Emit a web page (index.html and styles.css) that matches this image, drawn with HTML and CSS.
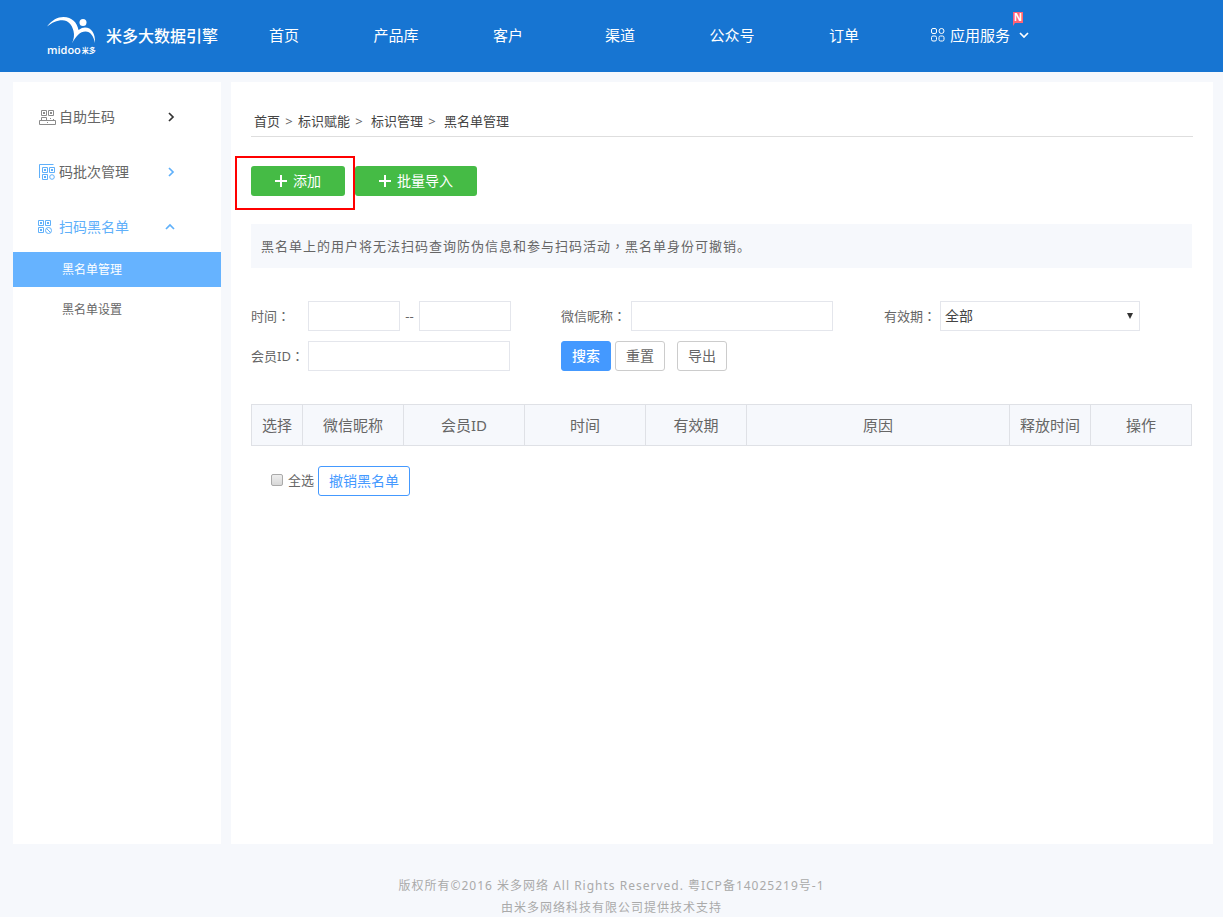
FILE: index.html
```html
<!DOCTYPE html>
<html lang="zh-CN">
<head>
<meta charset="utf-8">
<title>黑名单管理 - 米多大数据引擎</title>
<link rel="stylesheet" href="styles.css">
</head>
<body>
<header class="topbar">
  <a class="brand" href="#">
    <span class="brand-mark">
      <svg class="brand-figure" width="50" height="28" viewBox="0 0 50 28" fill="#fff" aria-hidden="true">
        <path d="M0 9.500C5 3 10.500 0 16.500 0c8.500 0 13.500 5.500 15 13C34 11.300 36 10.500 38 10.500c6.500 0 10.500 6 10 15.500-1.500-7-4.500-11.500-9.500-11.500-5.500 0-9.500 4.500-13.500 12 2-5 2.500-8.500 1.500-12.500C25 7.500 21 3.200 15.500 3.200 9.500 3.200 5 5.500 0 9.500z"/>
        <circle cx="36" cy="5.500" r="3.500"/>
      </svg>
      <span class="brand-word">midoo<small>米多</small></span>
    </span>
    <span class="brand-name">米多大数据引擎</span>
  </a>
  <nav class="mainnav" aria-label="主导航">
    <a href="#">首页</a>
    <a href="#">产品库</a>
    <a href="#">客户</a>
    <a href="#">渠道</a>
    <a href="#">公众号</a>
    <a href="#">订单</a>
    <a class="apps" href="#">
      <svg width="14" height="14" viewBox="0 0 14 14" fill="none" stroke="#fff" aria-hidden="true">
        <rect x=".5" y=".5" width="5" height="5" rx="1.500"/><circle cx="10.500" cy="3" r="2.500"/>
        <rect x=".5" y="8" width="5" height="5" rx="1.500"/><rect x="8" y="8" width="5" height="5" rx="1.500"/>
      </svg>
      <span class="apps-label">应用服务<span class="new-flag">N</span></span>
      <svg width="10" height="6" viewBox="0 0 10 6" fill="none" stroke="#fff" stroke-width="1.700" aria-hidden="true"><path d="M1 1l4 4 4-4"/></svg>
    </a>
  </nav>
</header>

<div class="layout">
  <aside class="sidebar">
    <a class="side-item" href="#">
      <svg class="side-icon" width="18" height="18" viewBox="0 0 18 18" fill="none" stroke="#8a8a8a" aria-hidden="true">
        <path d="M3.500 2.500h5v5h-5zM10.500 2.500h5v5h-5zM3.500 12.500v-3h5v3M1.500 12.500h16v4h-16z"/>
        <path d="M5 5h2M12 5h2" stroke-width="2"/><path d="M12 10.500h1M15 11.500h1M9 14.500h1"/>
      </svg>
      <span>自助生码</span>
      <svg class="arrow" width="10" height="10" viewBox="0 0 10 10" fill="none" stroke="#333" stroke-width="1.700" aria-hidden="true"><path d="M3 1l4 4-4 4"/></svg>
    </a>
    <a class="side-item" href="#">
      <svg class="side-icon" width="18" height="18" viewBox="0 0 18 18" fill="none" stroke="#5fb0fa" aria-hidden="true">
        <path d="M1.500 15v-13.500h14M4.500 4.500h5v5h-5zM11.500 4.500h5v5h-5zM4.500 11.500h5v5h-5z"/><circle cx="14" cy="14" r="2.300"/>
        <path d="M6 7h2M13 7h2M6 14h2" stroke-width="2"/>
      </svg>
      <span>码批次管理</span>
      <svg class="arrow" width="10" height="10" viewBox="0 0 10 10" fill="none" stroke="#5fb0fa" stroke-width="1.700" aria-hidden="true"><path d="M3 1l4 4-4 4"/></svg>
    </a>
    <a class="side-item open" href="#">
      <svg class="side-icon" width="18" height="18" viewBox="0 0 18 18" fill="none" stroke="#5fb0fa" aria-hidden="true">
        <path d="M.5 2.500h5v5h-5zM7.500 2.500h5v5h-5zM.5 9.500h5v5h-5z"/><circle cx="10.500" cy="12.500" r="3"/><path d="M8.500 10.500l4 4"/>
        <path d="M2 5h2M9 5h2M2 12h2" stroke-width="2"/>
      </svg>
      <span>扫码黑名单</span>
      <svg class="arrow" width="10" height="10" viewBox="0 0 10 10" fill="none" stroke="#5fb0fa" stroke-width="1.700" aria-hidden="true"><path d="M1 7l4-4 4 4"/></svg>
    </a>
    <a class="sub-item active" href="#">黑名单管理</a>
    <a class="sub-item" href="#">黑名单设置</a>
  </aside>

  <main class="content">
    <nav class="crumbs" aria-label="面包屑">
      <a href="#">首页</a><i>&gt;</i><a href="#">标识赋能</a><i>&gt;</i><a href="#">标识管理</a><i>&gt;</i><span>黑名单管理</span>
    </nav>

    <div class="actions">
      <div class="marked">
        <button class="btn-green" type="button"><svg width="12" height="12" viewBox="0 0 12 12" stroke="#fff" stroke-width="2" aria-hidden="true"><path d="M6 0v12M0 6h12"/></svg>添加</button>
      </div>
      <button class="btn-green wide" type="button"><svg width="12" height="12" viewBox="0 0 12 12" stroke="#fff" stroke-width="2" aria-hidden="true"><path d="M6 0v12M0 6h12"/></svg>批量导入</button>
    </div>

    <p class="notice">黑名单上的用户将无法扫码查询防伪信息和参与扫码活动<span class="mid" lang="zh-TW">，</span>黑名单身份可撤销。</p>

    <form class="filters">
      <div class="field">
        <label for="from">时间<span class="mid" lang="zh-TW">：</span></label>
        <input class="date" id="from" type="text"><span class="dash">--</span><input class="date" type="text" aria-label="结束时间">
      </div>
      <div class="field nick">
        <label for="nick">微信昵称<span class="mid" lang="zh-TW">：</span></label>
        <input id="nick" type="text">
      </div>
      <div class="field valid">
        <label for="valid">有效期<span class="mid" lang="zh-TW">：</span></label>
        <span class="select-wrap"><select id="valid"><option>全部</option></select></span>
      </div>
      <div class="field">
        <label for="member">会员ID<span class="mid" lang="zh-TW">：</span></label>
        <input id="member" type="text">
      </div>
      <div class="buttons">
        <button class="btn primary" type="button">搜索</button>
        <button class="btn" type="reset">重置</button>
        <button class="btn export" type="button">导出</button>
      </div>
    </form>

    <table class="list">
      <colgroup><col class="c-pick"><col class="c-mid"><col class="c-long"><col class="c-long"><col class="c-mid"><col><col class="c-free"><col class="c-mid"></colgroup>
      <thead>
        <tr><th>选择</th><th>微信昵称</th><th>会员ID</th><th>时间</th><th>有效期</th><th>原因</th><th>释放时间</th><th>操作</th></tr>
      </thead>
    </table>

    <div class="bulk">
      <label class="all"><input type="checkbox">全选</label>
      <button class="btn-outline" type="button">撤销黑名单</button>
    </div>
  </main>
</div>

<footer class="footer">
  <p>版权所有©2016 米多网络 All Rights Reserved. 粤ICP备14025219号-1</p>
  <p>由米多网络科技有限公司提供技术支持</p>
</footer>
</body>
</html>
```
FILE: styles.css
```css
* { box-sizing: border-box; }
body {
  margin: 0;
  min-height: 100vh;
  display: flex;
  flex-direction: column;
  background: #f6f8fc;
  color: #666;
  font: 13px/20px "Noto Sans", "Noto Sans CJK SC", sans-serif;
}
a { color: inherit; text-decoration: none; }
p { margin: 0; }
svg { flex: none; display: block; }
button, input, select { font: inherit; color: inherit; margin: 0; }
button { cursor: pointer; }
.mid { font-family: "Noto Sans CJK TC", sans-serif; line-height: 1; }

.topbar { display: flex; height: 72px; padding-left: 47px; background: #1775d2; color: #fff; }
.brand { display: flex; align-items: center; width: 181px; gap: 9px; }
.brand-mark { width: 50px; }
.brand-word { display: flex; align-items: center; font: 600 11px/10px "Open Sans", sans-serif; }
.brand-word small { font: 700 7px/10px "Noto Sans CJK SC", sans-serif; margin-left: 1px; white-space: nowrap; }
.brand-name { font-size: 16px; font-weight: 500; white-space: nowrap; }
.mainnav { display: flex; height: 70px; font-size: 15px; }
.mainnav a { display: flex; align-items: center; justify-content: center; width: 112px; }
.mainnav .apps { width: 160px; gap: 5px; }
.apps-label { position: relative; margin-right: 4px; }
.new-flag {
  position: absolute; top: -13px; right: -13px; width: 10px; height: 14px;
  background: #ff6376; clip-path: polygon(0 0, 100% 0, 100% 79%, 20% 79%, 0 100%);
  font: 700 10px/11px "Noto Sans", sans-serif; text-align: center;
}

.layout { flex: 1; display: flex; gap: 10px; margin: 10px 10px 0 13px; }
.sidebar { width: 208px; flex: none; background: #fff; padding-top: 7px; }
.side-item { display: flex; align-items: center; height: 55px; padding: 0 45px 0 25px; font-size: 14px; }
.side-icon { margin-right: 3px; }
.arrow { margin-left: auto; }
.side-item.open { color: #5fb0fa; height: 53px; padding-top: 2px; padding-right: 46px; }
.sub-item { display: block; height: 35px; padding-left: 49px; margin-bottom: 5px; font-size: 12px; line-height: 35px; }
.sub-item.active { background: #66b3ff; color: #fff; }

.content { flex: 1; min-width: 0; background: #fff; padding: 28px 21px 0 20px; }
.crumbs { display: flex; height: 27px; padding-left: 3px; margin-right: -1px; border-bottom: 1px solid #dedede; line-height: 22px; color: #444; }
.crumbs i { font-style: normal; color: #666; width: 18px; text-align: center; }
.crumbs i + a + i { width: 21px; padding-right: 3px; }
.actions { display: flex; gap: 10px; margin-top: 29px; }
.marked { position: relative; }
.marked::after { content: ""; position: absolute; top: -10px; right: -10px; bottom: -14px; left: -16px; border: 2px solid #f00; pointer-events: none; }
.btn-green { display: flex; align-items: center; justify-content: center; gap: 6px; width: 94px; height: 30px; padding: 0; border: 0; border-radius: 3px; background: #45bb45; color: #fff; font-size: 14px; }
.btn-green.wide { width: 122px; }
.notice { margin-top: 28px; padding: 12px 10px; background: #f6f8fc; letter-spacing: 1px; }

.filters { display: grid; grid-template-columns: 310px 323px 1fr; gap: 10px 0; margin-top: 33px; }
.field { display: flex; align-items: center; }
.field label { width: 57px; white-space: nowrap; }
.nick label { width: 70px; }
.valid label { width: 56px; }
.field input, .field select { width: 202px; height: 30px; padding: 0 4px; border: 1px solid #e4e6ec; background: #fff; border-radius: 0; }
.field .date { width: 92px; }
.dash { width: 19px; text-align: center; }
.select-wrap { position: relative; }
.field select { display: block; width: 200px; appearance: none; font-size: 14px; color: #444; }
.select-wrap::after { content: ""; position: absolute; right: 7px; top: 12px; border: solid transparent; border-width: 6px 3px 0; border-top-color: #333; pointer-events: none; }
.buttons { display: flex; gap: 4px; }
.btn { width: 50px; height: 30px; padding: 0; border: 1px solid #ccc; border-radius: 3px; background: #fff; font-size: 14px; }
.primary { border-color: #4499ff; background: #4499ff; color: #fff; font-weight: 500; }
.export { margin-left: 8px; }

.list { width: 100%; margin-top: 33px; border-collapse: collapse; table-layout: fixed; font-size: 15px; }
.list th { height: 41px; padding: 0; border: 1px solid #dfe1e6; background: #f6f8fc; font-weight: 400; }
.c-pick { width: 51px; }
.c-mid { width: 101px; }
.c-long { width: 121px; }
.c-free { width: 81px; }

.bulk { display: flex; align-items: center; gap: 4px; margin: 20px 0 0 20px; }
.all { display: flex; align-items: center; gap: 5px; padding-bottom: 2px; }
.all input { appearance: none; width: 12px; height: 12px; border: 1px solid #aaa; border-radius: 2px; background: linear-gradient(#eee, #d8d8d8); }
.btn-outline { width: 92px; height: 30px; padding: 0; border: 1px solid #4499ff; border-radius: 3px; background: #fff; color: #4499ff; font-size: 14px; }

.footer { height: 73px; padding-top: 31px; text-align: center; color: #aaa; font-size: 12px; line-height: 22px; letter-spacing: 1px; overflow: hidden; }
```
